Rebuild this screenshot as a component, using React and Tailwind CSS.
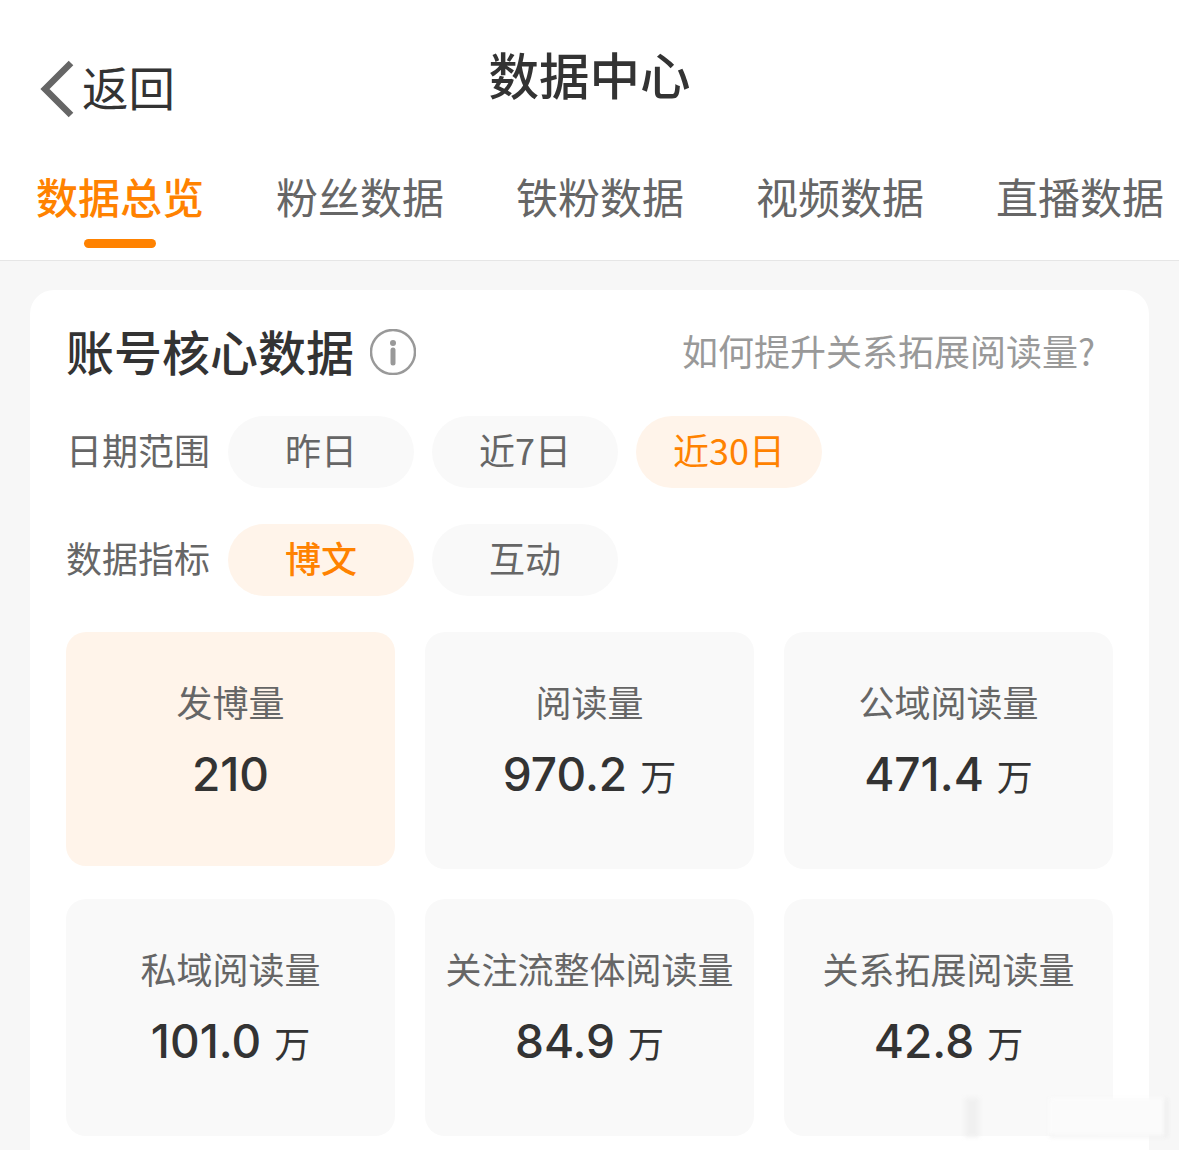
import React from 'react';

const dateOptions = [
  { label: '昨日' },
  { label: '近7日' },
  { label: '近30日', active: true },
];

const metricOptions = [
  { label: '博文', active: true, bold: true },
  { label: '互动' },
];

const stats = [
  { label: '发博量', value: '210', active: true },
  { label: '阅读量', value: '970.2', unit: '万' },
  { label: '公域阅读量', value: '471.4', unit: '万' },
  { label: '私域阅读量', value: '101.0', unit: '万' },
  { label: '关注流整体阅读量', value: '84.9', unit: '万' },
  { label: '关系拓展阅读量', value: '42.8', unit: '万' },
];

const tabs = ['数据总览', '粉丝数据', '铁粉数据', '视频数据', '直播数据'];

function Pill({ label, active, bold }) {
  return (
    <div
      className={`w-[186px] h-[72px] pb-[6px] rounded-full flex items-center justify-center text-[36px] ${
        active ? 'bg-[#fff4ea] text-[#ff8200]' : 'bg-[#f9f9f9] text-[#666666]'
      } ${bold ? 'font-medium' : ''}`}
    >
      {label}
    </div>
  );
}

function FilterRow({ label, options }) {
  return (
    <div className="flex items-center h-[72px]">
      <div className="w-[162px] pb-[6px] text-[36px] text-[#666666] whitespace-nowrap text-right pr-[19px]">{label}</div>
      <div className="flex gap-[18px]">
        {options.map((o) => (
          <Pill key={o.label} {...o} />
        ))}
      </div>
    </div>
  );
}

function StatCard({ label, value, unit, active }) {
  return (
    <div
      className={`rounded-[20px] flex flex-col items-center pt-[45px] ${
        active ? 'bg-[#fff4ea] h-[234px]' : 'bg-[#f9f9f9] h-[237px]'
      }`}
    >
      <div className="text-[36px] leading-[48px] text-[#666666] whitespace-nowrap">{label}</div>
      <div className="mt-[16px] flex items-baseline text-[#333333] leading-[66px]">
        <span className="text-[46px] font-medium font-['Inter','Liberation_Sans',sans-serif]">{value}</span>
        {unit && <span className="ml-[13px] text-[36px]">{unit}</span>}
      </div>
    </div>
  );
}

export default function App() {
  return (
    <div className="relative h-[1150px] overflow-hidden bg-[#f7f7f7] font-['Noto_Sans_CJK_SC','Liberation_Sans',sans-serif]">
      {/* Header */}
      <div className="h-[261px] bg-white border-b border-[#e6e6e6]">
        <div className="grid grid-cols-[1fr_auto_1fr] pt-[45px] h-[150px]">
          <div className="flex items-center h-[88px] pl-[38px]">
            <svg width="38" height="60" viewBox="0 0 38 60" fill="none">
              <polyline points="33,4 7,30 33,56" stroke="#666666" strokeWidth="6.5" />
            </svg>
            <span className="ml-[6px] mb-[6px] text-[46.5px] leading-none text-[#333333]">返回</span>
          </div>
          <div className="-mt-[4px] text-[50.5px] leading-[64px] font-medium text-[#333333]">数据中心</div>
          <div />
        </div>
        <div className="flex gap-[74px] pl-[37px] whitespace-nowrap">
          {tabs.map((t, i) => (
            <div key={t} className="w-[166px] h-[110px] flex flex-col items-center">
              <div
                className={`text-[42px] leading-[91px] ${i === 0 ? 'text-[#ff8200] font-medium' : 'text-[#666666]'}`}
              >
                {t}
              </div>
              {i === 0 && <div className="-mt-[2px] w-[72px] h-[9px] rounded-full bg-[#ff8200]" />}
            </div>
          ))}
        </div>
      </div>

      {/* Card */}
      <div className="mx-[30px] mt-[29px] bg-white rounded-[24px] px-[36px] pt-[32px] h-[900px]">
        <div className="flex items-center justify-between h-[60px]">
          <div className="flex items-center">
            <span className="pb-[4px] text-[48px] leading-[60px] font-medium text-[#333333]">账号核心数据</span>
            <svg width="46" height="46" viewBox="0 0 46 46" fill="none" className="ml-[16px]">
              <circle cx="23" cy="23" r="22" stroke="#999999" strokeWidth="2.5" />
              <circle cx="23" cy="14" r="3" fill="#999999" />
              <line x1="23" y1="21" x2="23" y2="34" stroke="#999999" strokeWidth="5" strokeLinecap="round" />
            </svg>
          </div>
          <span className="pb-[4px] text-[36px] text-[#999999] pr-[18px] whitespace-nowrap">如何提升关系拓展阅读量?</span>
        </div>

        <div className="mt-[34px] flex flex-col gap-[36px]">
          <FilterRow label="日期范围" options={dateOptions} />
          <FilterRow label="数据指标" options={metricOptions} />
        </div>

        <div className="mt-[36px] grid grid-cols-3 gap-x-[30px] gap-y-[30px] items-start">
          {stats.map((s) => (
            <StatCard key={s.label} {...s} />
          ))}
        </div>
      </div>

      {/* Blurred watermark */}
      <div className="absolute left-[965px] top-[1098px] w-[202px] h-[39px] flex items-stretch gap-[14px] blur-[2px]">
        <div className="w-[14px] bg-[#f0f0f0]" />
        <div className="w-[42px]" />
        <div className="flex-1 bg-[#fbfbfb] rounded-[2px] border-r-2 border-b border-[#e4e4e4]" />
      </div>
    </div>
  );
}
